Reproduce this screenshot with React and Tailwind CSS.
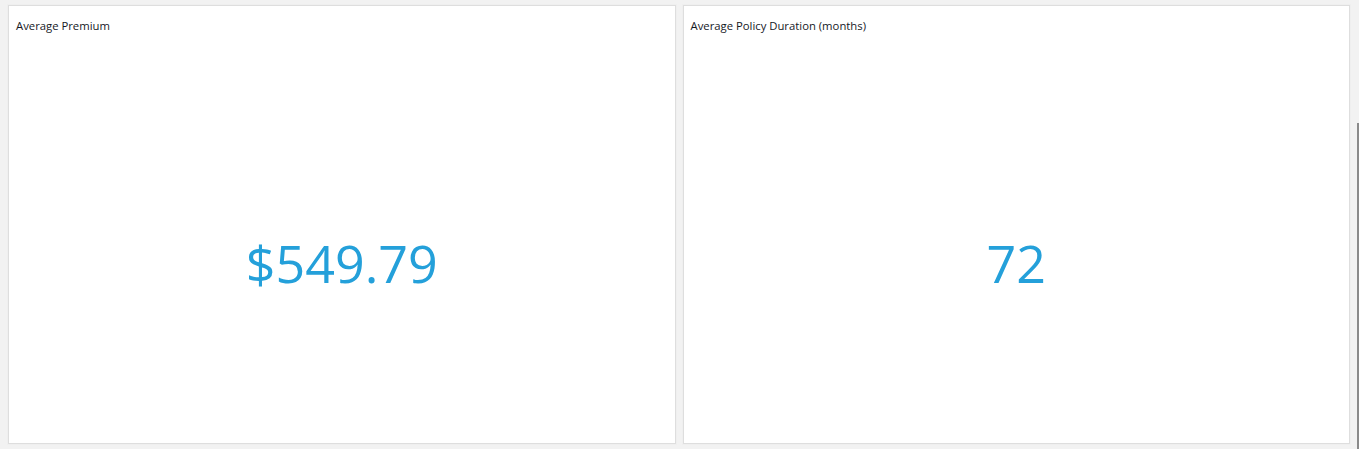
import React from 'react';

const kpis = [
  { title: 'Average Premium', value: '$549.79' },
  { title: 'Average Policy Duration (months)', value: '72' },
];

function KpiCard({ title, value }) {
  return (
    <div className="flex-1 flex flex-col bg-white border border-[#dedede] shadow-[0_0_0_1px_#efefef]">
      {/* Title */}
      <div className="pl-[7px] pt-[13px] text-[11.3px] leading-[14px] text-[#16191f]">
        {title}
      </div>
      {/* Value */}
      <div className="flex-1 flex items-center justify-center pt-[50px]">
        <span className="text-[52px] leading-none text-[#24a0da]">{value}</span>
      </div>
    </div>
  );
}

function App() {
  return (
    <div
      className="relative h-[449px] w-[1359px] bg-[#f2f2f2] pt-[5px] pb-[5px] pl-[8px] pr-[9px] flex gap-[7px] overflow-hidden"
      style={{ fontFamily: '"Open Sans", "Noto Sans", sans-serif' }}
    >
      {kpis.map((k) => (
        <KpiCard key={k.title} title={k.title} value={k.value} />
      ))}
      {/* scrollbar sliver */}
      <div className="absolute right-0 top-[123px] bottom-0 w-[2px] bg-[#8a8a8a]" />
    </div>
  );
}

export default App;
